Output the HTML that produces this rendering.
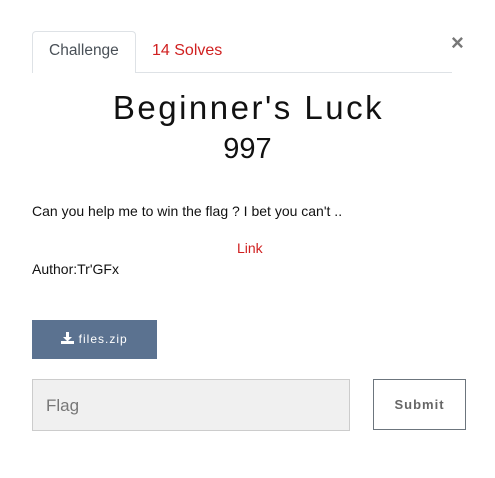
<!DOCTYPE html>
<html><head><style>
body{margin:0;width:495px;height:478px;background:#fff;font-family:"Liberation Sans",sans-serif;position:relative;overflow:hidden}
.a{position:absolute}
</style></head><body>
<div class="a" style="left:32px;top:31px;width:102px;height:41px;border:1px solid #dee2e6;border-bottom:none;border-radius:4px 4px 0 0;background:#fff"></div>
<div class="a" style="left:32px;top:72px;width:420px;height:1px;background:#dee2e6"></div>
<div class="a" style="left:33px;top:72px;width:102px;height:1px;background:#fff"></div>
<div class="a" style="left:49px;top:42px;font-size:15.5px;color:#495057">Challenge</div>
<div class="a" style="left:152px;top:42px;font-size:16px;color:#d02020">14 Solves</div>
<div class="a" style="left:451px;top:30px;font-size:22px;font-weight:bold;color:#777">×</div>
<div class="a" style="left:0;width:497px;top:89px;text-align:center;font-size:33px;letter-spacing:2.5px;color:#111">Beginner's Luck</div>
<div class="a" style="left:0;width:495px;top:133px;text-align:center;font-size:29px;color:#111">997</div>
<div class="a" style="left:32px;top:203px;font-size:14px;color:#111">Can you help me to win the flag ? I bet you can't ..</div>
<div class="a" style="left:237px;top:240px;font-size:14px;color:#d02020">Link</div>
<div class="a" style="left:32px;top:261px;font-size:14px;color:#111">Author:Tr'GFx</div>
<div class="a" style="left:32px;top:320px;width:125px;height:39px;background:#5b7290;color:#fff;font-size:12px;letter-spacing:1px;line-height:39px;text-align:center">
<svg width="13" height="12" viewBox="0 0 13 12" style="vertical-align:-1px"><path d="M5 0h3v5h3l-4.5 4.5L2 5h3z" fill="#fff"/><rect x="0" y="9" width="13" height="3" fill="#fff"/></svg> files.zip</div>
<div class="a" style="left:32px;top:379px;width:316px;height:50px;background:#f0f0f0;border:1px solid #ccc"></div>
<div class="a" style="left:46px;top:396px;font-size:17px;color:#777">Flag</div>
<div class="a" style="left:373px;top:379px;width:91px;height:49px;border:1px solid #6c757d;text-align:center;line-height:49px;font-size:13px;font-weight:bold;letter-spacing:1px;color:#666">Submit</div>
</body></html>
